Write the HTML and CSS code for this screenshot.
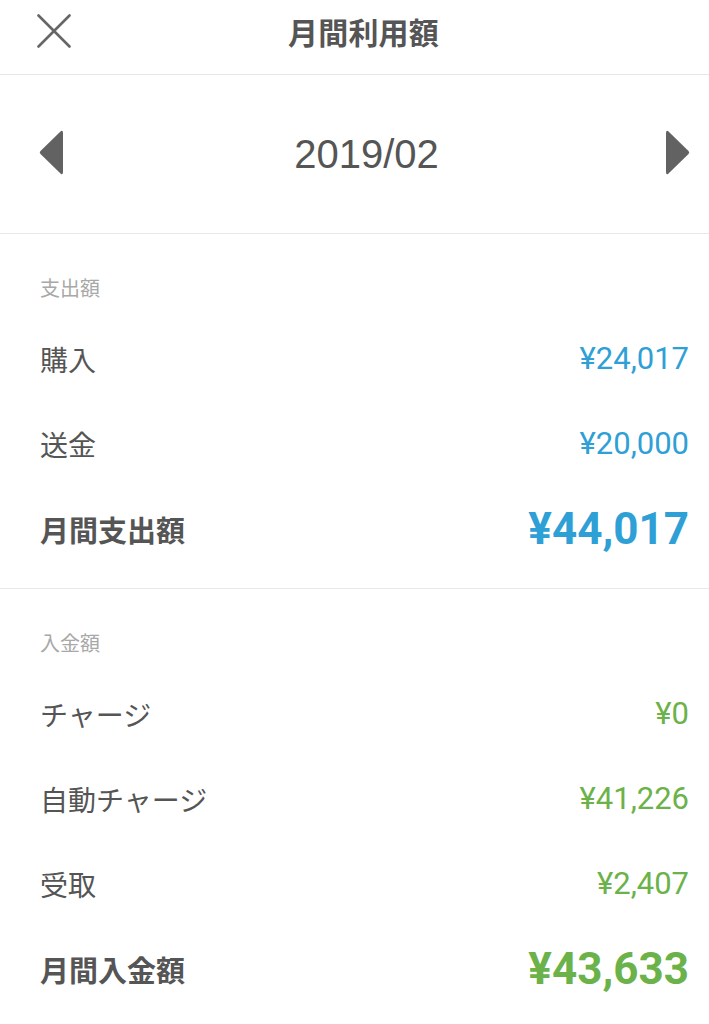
FILE: index.html
```html
<!DOCTYPE html>
<html lang="ja">
<head>
<meta charset="utf-8">
<title>月間利用額</title>
<link rel="stylesheet" href="styles.css">
</head>
<body>
<div class="screen">
  <header class="topbar">
    <button class="close" aria-label="閉じる">
      <svg width="34" height="34" viewBox="0 0 34 34"><path d="M1.5 1.5 L32.5 32.5 M32.5 1.5 L1.5 32.5" stroke="#666" stroke-width="2.6" stroke-linecap="round" fill="none"/></svg>
    </button>
    <h1 class="title">月間利用額</h1>
    <span class="spacer"></span>
  </header>

  <nav class="month">
    <svg class="arrow" width="24" height="47" viewBox="0 0 24 47"><path d="M22 2 Q24 1 24 4 L24 43 Q24 46 22 45 L1.5 25 Q0 23.5 1.5 22 Z" fill="#626262"/></svg>
    <span class="month-label">2019/02</span>
    <svg class="arrow" width="24" height="47" viewBox="0 0 24 47"><path d="M2 2 Q0 1 0 4 L0 43 Q0 46 2 45 L22.5 25 Q24 23.5 22.5 22 Z" fill="#626262"/></svg>
  </nav>

  <section class="group out">
    <h2 class="group-label">支出額</h2>
    <div class="rows">
      <div class="row"><span class="name">購入</span><span class="amount">¥24,017</span></div>
      <div class="row"><span class="name">送金</span><span class="amount">¥20,000</span></div>
      <div class="row total"><span class="name">月間支出額</span><span class="amount">¥44,017</span></div>
    </div>
  </section>

  <section class="group in">
    <h2 class="group-label">入金額</h2>
    <div class="rows">
      <div class="row"><span class="name">チャージ</span><span class="amount">¥0</span></div>
      <div class="row"><span class="name">自動チャージ</span><span class="amount">¥41,226</span></div>
      <div class="row"><span class="name">受取</span><span class="amount">¥2,407</span></div>
      <div class="row total"><span class="name">月間入金額</span><span class="amount">¥43,633</span></div>
    </div>
  </section>
</div>
</body>
</html>
```
FILE: styles.css
```css
* { box-sizing: border-box; }
html, body { margin: 0; padding: 0; background: #fff; }
body {
  font-family: "Noto Sans CJK JP", "Noto Sans", sans-serif;
  color: #555;
  width: 709px;
  height: 1024px;
  overflow: hidden;
}
.screen { display: flex; flex-direction: column; }

.topbar {
  height: 75px;
  padding: 0 37px 13px 37px;
  display: flex;
  align-items: center;
  justify-content: space-between;
  border-bottom: 1px solid #e8e8e8;
}
.close {
  width: 34px; height: 34px; padding: 0; margin: 0;
  border: none; background: none; display: flex;
}
.spacer { width: 16px; }
.title {
  margin: 0;
  font-size: 30px;
  font-weight: 700;
  line-height: 34px;
  color: #555;
  letter-spacing: 0.2px;
}

.month {
  height: 159px;
  padding: 0 19px 4px 39px;
  display: flex;
  align-items: center;
  justify-content: space-between;
  border-bottom: 1px solid #e8e8e8;
}
.month-label {
  font-family: "Liberation Sans", Roboto, sans-serif;
  font-size: 40px;
  color: #555;
  margin-top: 4px;
  margin-left: 4px;
}

.group { display: flex; flex-direction: column; padding: 0 20px 0 40px; }
.group.out { border-bottom: 1px solid #e8e8e8; padding-bottom: 17px; }
.group-label {
  margin: 0;
  padding-top: 40px;
  font-size: 20px;
  line-height: 28px;
  font-weight: 400;
  color: #a8a8a8;
}
.rows { display: flex; flex-direction: column; padding-top: 14px; }
.row {
  height: 85px;
  display: flex;
  align-items: center;
  justify-content: space-between;
}
.name { font-size: 28px; color: #555; }
.amount {
  font-family: Roboto, "Liberation Sans", sans-serif;
  font-size: 31px;
}
.row.total .name { font-weight: 700; font-size: 29px; }
.row.total .amount { font-size: 44px; font-weight: 700; }
.out .amount { color: #2fa0d6; }
.in .amount { color: #6cb24a; }
```
